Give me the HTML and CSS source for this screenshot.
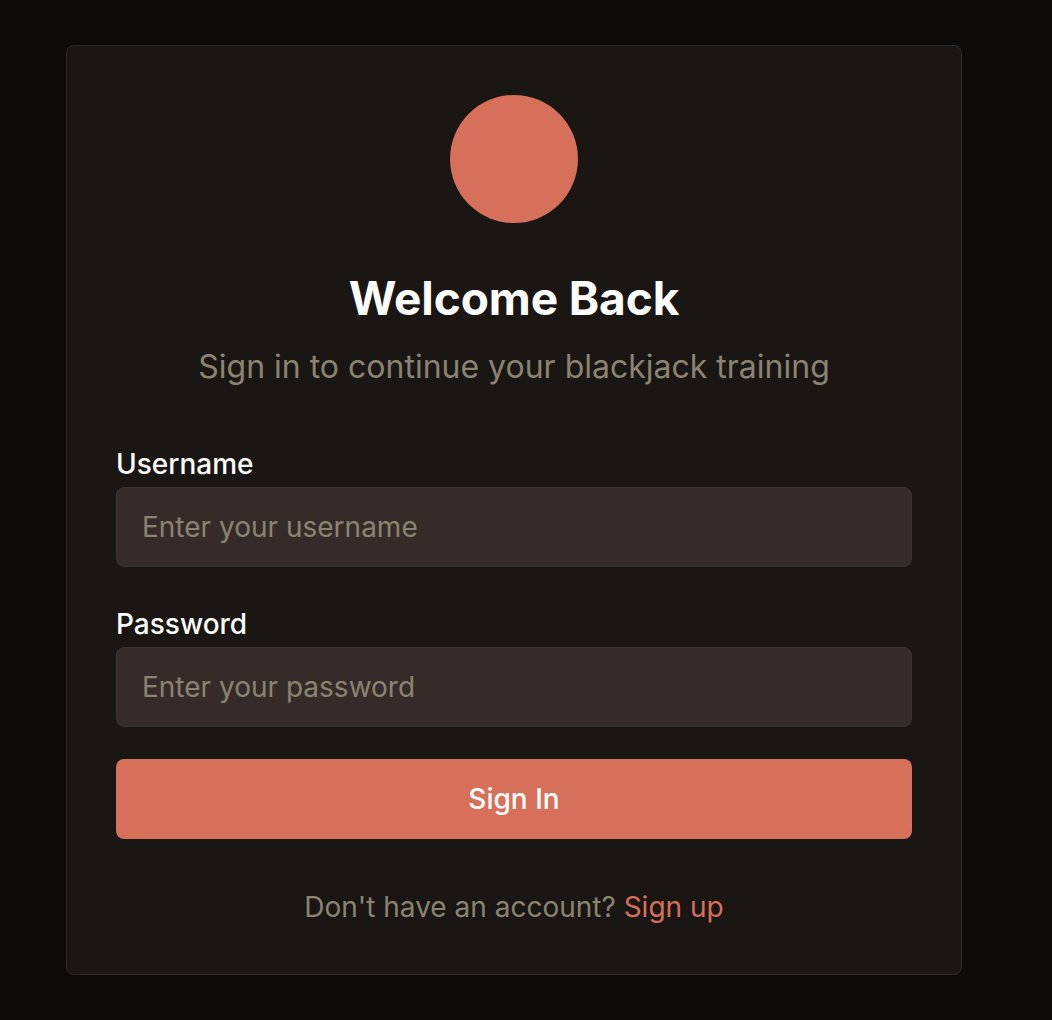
FILE: index.html
```html
<!DOCTYPE html>
<html lang="en">
<head>
<meta charset="utf-8">
<title>Welcome Back</title>
<link rel="stylesheet" href="styles.css">
</head>
<body>
<main class="page">
  <section class="card">
    <div class="logo"></div>
    <h1 class="title">Welcome Back</h1>
    <p class="subtitle">Sign in to continue your blackjack training</p>
    <form class="form">
      <div class="field">
        <label class="label" for="username">Username</label>
        <input class="input" id="username" type="text" placeholder="Enter your username">
      </div>
      <div class="field">
        <label class="label" for="password">Password</label>
        <input class="input" id="password" type="password" placeholder="Enter your password">
      </div>
      <button class="button" type="button">Sign In</button>
    </form>
    <p class="footer">Don't have an account? <a class="link" href="#">Sign up</a></p>
  </section>
</main>
</body>
</html>
```

FILE: styles.css
```css
* { box-sizing: border-box; }
html, body { margin: 0; padding: 0; background: #0c0b0a; }
body { font-family: Inter, "Noto Sans", sans-serif; color: #fff; }
.page {
  display: flex;
  justify-content: center;
  padding: 45px 24px 45px 0;
  min-height: 1020px;
}
.card {
  width: 896px;
  background: #1a1614;
  border: 1px solid #2e2a27;
  border-radius: 8px;
  padding: 49px 48px 51px;
  display: flex;
  flex-direction: column;
  align-items: center;
}
.logo {
  width: 128px;
  height: 128px;
  border-radius: 50%;
  background: #d6705a;
}
.title {
  margin: 47px 0 0;
  font-size: 46px;
  line-height: 56px;
  font-weight: 700;
  color: #fff;
  letter-spacing: -0.1px;
}
.subtitle {
  margin: 21px 0 0;
  font-size: 32px;
  line-height: 40px;
  color: #8a8470;
}
.form {
  width: 100%;
  margin-top: 61px;
  display: flex;
  flex-direction: column;
}
.field { display: flex; flex-direction: column; }
.field + .field { margin-top: 41px; }
.label {
  font-size: 28px;
  line-height: 32px;
  font-weight: 500;
  color: #fff;
  margin: 0 1px 7px;
}
.input {
  height: 80px;
  margin: 0 1px;
  background: #352c2a;
  border: 1px solid #3a3230;
  border-radius: 8px;
  padding: 0 25px;
  font-family: inherit;
  font-size: 28px;
  color: #fff;
  outline: none;
}
.input::placeholder { color: #8a8470; opacity: 1; }
.button {
  margin: 32px 1px 0;
  height: 80px;
  border: none;
  border-radius: 8px;
  background: #d6705a;
  color: #fff;
  font-family: inherit;
  font-size: 28px;
  font-weight: 500;
  cursor: pointer;
}
.footer {
  margin: 52px 0 0;
  font-size: 28px;
  line-height: 32px;
  color: #8a8470;
}
.link { color: #d6705a; text-decoration: none; }
```
